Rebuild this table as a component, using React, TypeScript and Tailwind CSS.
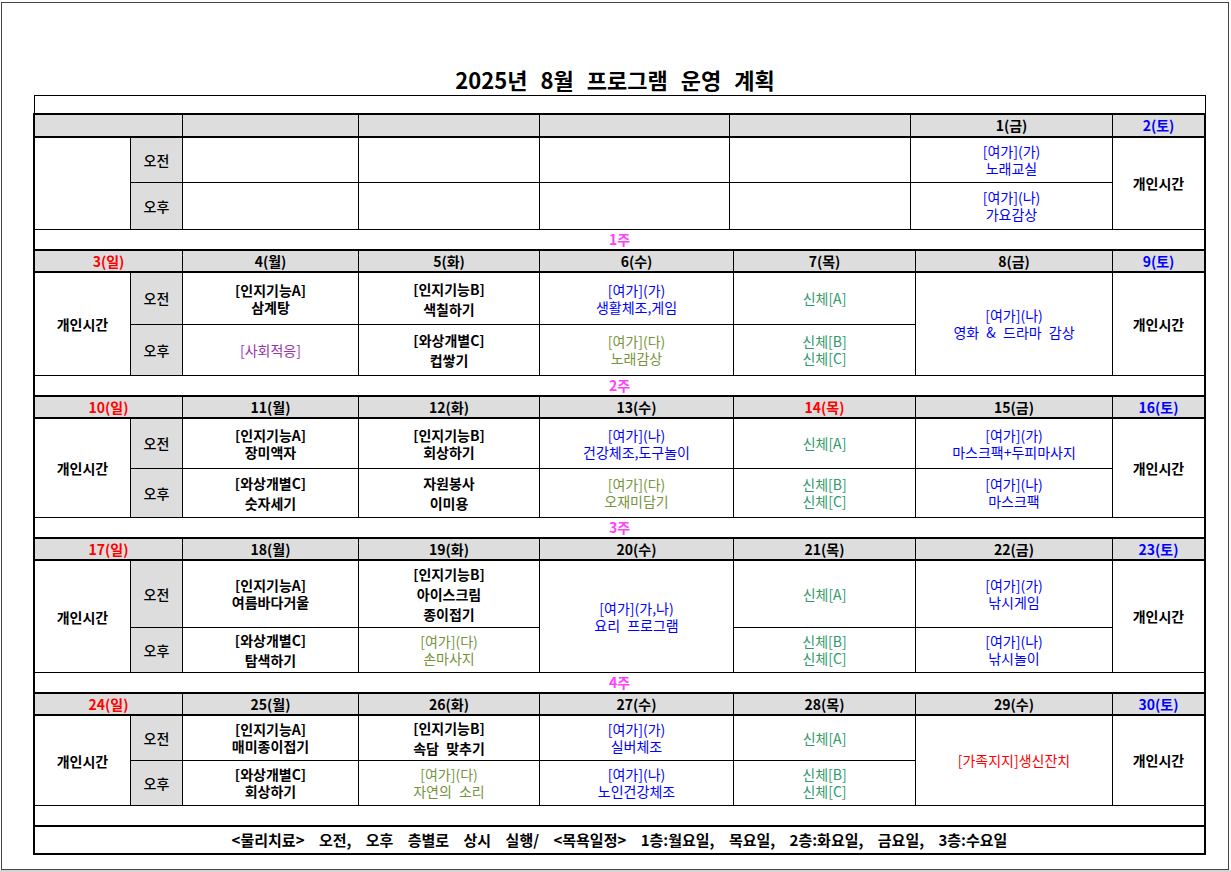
import React from 'react';

type Tone = 'k' | 'b' | 'g' | 'o' | 'p' | 'r';

interface Entry {
  lines: string[];
  tone: Tone;
  loose?: boolean;
  span?: boolean;
}

interface Week {
  label?: string;
  cols: string;
  headerH: string;
  rows: string;
  first: { text: string; tone: Tone };
  days: { text: string; tone: Tone }[];
  left: string;
  // five program columns, each either one spanning entry or [am, pm]
  slots: (Entry | [Entry | null, Entry | null])[];
}

const TONE: Record<Tone, string> = {
  k: 'text-black font-semibold',
  b: 'text-[#0000ff]',
  g: 'text-[#2f9a68]',
  o: 'text-[#76933c]',
  p: 'text-[#9933aa]',
  r: 'text-[#ff0000]',
};

const DAY_TONE: Record<Tone, string> = {
  k: 'text-black',
  b: 'text-[#0000ff]',
  g: 'text-black',
  o: 'text-black',
  p: 'text-black',
  r: 'text-[#ff0000]',
};

const COLS_FIRST = 'grid-cols-[95px_52px_176px_181px_190px_181px_202px_92px]';
const COLS_REST = 'grid-cols-[95px_52px_176px_181px_194px_182px_197px_92px]';

const e = (tone: Tone, lines: string[], loose = false): Entry => ({ lines, tone, loose });
const span = (tone: Tone, lines: string[]): Entry => ({ lines, tone, span: true });
const bodyA = (x: string) => e('g', [`신체[${x}]`]);
const bodyBC = e('g', ['신체[B]', '신체[C]']);

const WEEKS: Week[] = [
  {
    cols: COLS_FIRST,
    headerH: 'h-[25px]',
    rows: 'grid-rows-[45px_46px]',
    first: { text: '', tone: 'k' },
    days: [
      { text: '', tone: 'k' },
      { text: '', tone: 'k' },
      { text: '', tone: 'k' },
      { text: '', tone: 'k' },
      { text: '1(금)', tone: 'k' },
      { text: '2(토)', tone: 'b' },
    ],
    left: '',
    slots: [
      [null, null],
      [null, null],
      [null, null],
      [null, null],
      [e('b', ['[여가](가)', '노래교실']), e('b', ['[여가](나)', '가요감상'])],
    ],
    label: '1주',
  },
  {
    cols: COLS_REST,
    headerH: 'h-[24px]',
    rows: 'grid-rows-[52px_50px]',
    first: { text: '3(일)', tone: 'r' },
    days: [
      { text: '4(월)', tone: 'k' },
      { text: '5(화)', tone: 'k' },
      { text: '6(수)', tone: 'k' },
      { text: '7(목)', tone: 'k' },
      { text: '8(금)', tone: 'k' },
      { text: '9(토)', tone: 'b' },
    ],
    left: '개인시간',
    slots: [
      [e('k', ['[인지기능A]', '삼계탕']), e('p', ['[사회적응]'])],
      [e('k', ['[인지기능B]', '색칠하기'], true), e('k', ['[와상개별C]', '컵쌓기'], true)],
      [e('b', ['[여가](가)', '생활체조,게임']), e('o', ['[여가](다)', '노래감상'])],
      [bodyA('A'), bodyBC],
      span('b', ['[여가](나)', '영화 & 드라마 감상']),
    ],
    label: '2주',
  },
  {
    cols: COLS_REST,
    headerH: 'h-[24px]',
    rows: 'grid-rows-[50px_48px]',
    first: { text: '10(일)', tone: 'r' },
    days: [
      { text: '11(월)', tone: 'k' },
      { text: '12(화)', tone: 'k' },
      { text: '13(수)', tone: 'k' },
      { text: '14(목)', tone: 'r' },
      { text: '15(금)', tone: 'k' },
      { text: '16(토)', tone: 'b' },
    ],
    left: '개인시간',
    slots: [
      [e('k', ['[인지기능A]', '장미액자']), e('k', ['[와상개별C]', '숫자세기'], true)],
      [e('k', ['[인지기능B]', '회상하기']), e('k', ['자원봉사', '이미용'], true)],
      [e('b', ['[여가](나)', '건강체조,도구놀이']), e('o', ['[여가](다)', '오재미담기'])],
      [bodyA('A'), bodyBC],
      [e('b', ['[여가](가)', '마스크팩+두피마사지']), e('b', ['[여가](나)', '마스크팩'])],
    ],
    label: '3주',
  },
  {
    cols: COLS_REST,
    headerH: 'h-[24px]',
    rows: 'grid-rows-[67px_44px]',
    first: { text: '17(일)', tone: 'r' },
    days: [
      { text: '18(월)', tone: 'k' },
      { text: '19(화)', tone: 'k' },
      { text: '20(수)', tone: 'k' },
      { text: '21(목)', tone: 'k' },
      { text: '22(금)', tone: 'k' },
      { text: '23(토)', tone: 'b' },
    ],
    left: '개인시간',
    slots: [
      [e('k', ['[인지기능A]', '여름바다거울']), e('k', ['[와상개별C]', '탐색하기'], true)],
      [e('k', ['[인지기능B]', '아이스크림', '종이접기'], true), e('o', ['[여가](다)', '손마사지'])],
      span('b', ['[여가](가,나)', '요리 프로그램']),
      [bodyA('A'), bodyBC],
      [e('b', ['[여가](가)', '낚시게임']), e('b', ['[여가](나)', '낚시놀이'])],
    ],
    label: '4주',
  },
  {
    cols: COLS_REST,
    headerH: 'h-[24px]',
    rows: 'grid-rows-[45px_44px]',
    first: { text: '24(일)', tone: 'r' },
    days: [
      { text: '25(월)', tone: 'k' },
      { text: '26(화)', tone: 'k' },
      { text: '27(수)', tone: 'k' },
      { text: '28(목)', tone: 'k' },
      { text: '29(수)', tone: 'k' },
      { text: '30(토)', tone: 'b' },
    ],
    left: '개인시간',
    slots: [
      [e('k', ['[인지기능A]', '매미종이접기']), e('k', ['[와상개별C]', '회상하기'])],
      [e('k', ['[인지기능B]', '속담 맞추기'], true), e('o', ['[여가](다)', '자연의 소리'])],
      [e('b', ['[여가](가)', '실버체조']), e('b', ['[여가](나)', '노인건강체조'])],
      [bodyA('A'), bodyBC],
      span('r', ['[가족지지]생신잔치']),
    ],
  },
];

function Text({ entry }: { entry: Entry | null }) {
  if (!entry) return null;
  return (
    <div className={`${TONE[entry.tone]} ${entry.loose ? 'leading-[20px]' : 'leading-[17px]'}`}>
      {entry.lines.map((l) => (
        <div key={l}>{l}</div>
      ))}
    </div>
  );
}

function WeekBlock({ week }: { week: Week }) {
  const cells: React.ReactNode[] = [];
  cells.push(
    <div key="left" className="row-span-2 flex items-center justify-center font-semibold leading-[16px]">
      {week.left}
    </div>,
  );
  cells.push(
    <div key="am" className="flex items-center justify-center border-l border-b border-black bg-[#dddddd] font-medium">
      오전
    </div>,
  );
  week.slots.forEach((slot, i) => {
    if (Array.isArray(slot)) {
      cells.push(
        <div key={`a${i}`} className="flex items-center justify-center border-l border-b border-black text-center">
          <Text entry={slot[0]} />
        </div>,
      );
    } else {
      cells.push(
        <div key={`s${i}`} className="row-span-2 flex items-center justify-center border-l border-black text-center">
          <Text entry={slot} />
        </div>,
      );
    }
  });
  cells.push(
    <div key="right" className="row-span-2 flex items-center justify-center border-l border-black font-semibold">
      개인시간
    </div>,
  );
  cells.push(
    <div key="pm" className="flex items-center justify-center border-l border-black bg-[#dddddd] font-medium">
      오후
    </div>,
  );
  week.slots.forEach((slot, i) => {
    if (Array.isArray(slot)) {
      cells.push(
        <div key={`p${i}`} className="flex items-center justify-center border-l border-black text-center">
          <Text entry={slot[1]} />
        </div>,
      );
    }
  });

  return (
    <>
      <div className={`grid ${week.cols} ${week.headerH} border-y-2 border-black bg-[#dddddd] font-bold`}>
        <div className={`col-span-2 flex items-center justify-center ${DAY_TONE[week.first.tone]}`}>
          {week.first.text}
        </div>
        {week.days.map((d, i) => (
          <div key={i} className={`flex items-center justify-center border-l border-black ${DAY_TONE[d.tone]}`}>
            {d.text}
          </div>
        ))}
      </div>
      <div className={`grid ${week.cols} ${week.rows} border-b border-black`}>{cells}</div>
      <div className="flex h-[19px] items-center justify-center font-bold text-[#ff40ff]">{week.label ?? ''}</div>
    </>
  );
}

export default function App() {
  return (
    <div
      className="h-[872px] w-[1231px] overflow-hidden bg-white text-[14px] text-black [word-spacing:4px]"
      style={{ fontFamily: '"Noto Sans CJK KR", "Noto Sans", sans-serif' }}
    >
      <div className="ml-px mt-[2px] h-[868px] w-[1228px] border border-[#444444]">
        <div className="flex h-[92px] items-end justify-center pb-[3px]">
          <h1 className="text-[22px] font-bold leading-[26px] [word-spacing:8px]">2025년 8월 프로그램 운영 계획</h1>
        </div>
        <div className="ml-[31px] w-[1173px]">
          <div className="ml-px h-[18px] border-x border-t border-black" />
          <div className="border-x-2 border-black">
            {WEEKS.map((w, i) => (
              <WeekBlock key={i} week={w} />
            ))}
            <div className="flex h-[30px] items-center justify-center border-y-2 border-black text-[15px] font-semibold [word-spacing:11px]">
              &lt;물리치료&gt; 오전, 오후 층별로 상시 실행/ &lt;목욕일정&gt; 1층:월요일, 목요일, 2층:화요일, 금요일, 3층:수요일
            </div>
          </div>
        </div>
      </div>
      <div className="h-[3px] w-full bg-[#d4d4d4]" />
    </div>
  );
}
